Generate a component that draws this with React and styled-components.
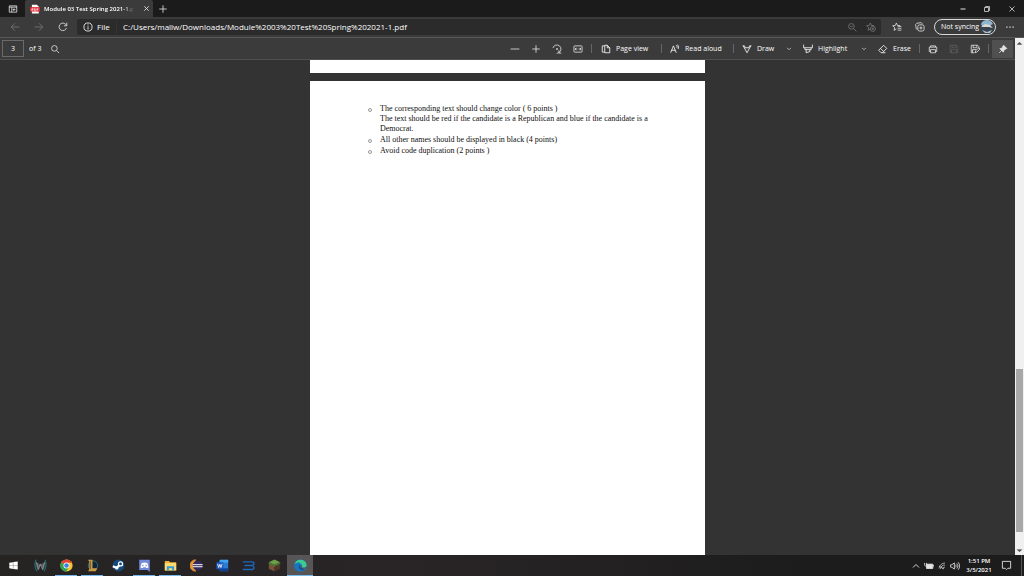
import React from "react";
import styled, { createGlobalStyle } from "styled-components";

const GlobalStyle = createGlobalStyle`
  *,
  *::before {
    box-sizing: border-box;
  }

  body {
    margin: 0;
    background: #333333;
    color: #ffffff;
    font: 8px/10px "Open Sans", "Noto Sans", sans-serif;
  }

  button,
  input {
    margin: 0;
    padding: 0;
    border: 0;
    background: none;
    color: inherit;
    font: inherit;
  }

  svg {
    display: block;
    flex: none;
  }
`;

const Screen = styled.div`
  display: flex;
  flex-direction: column;
  height: 100vh;
  overflow: hidden;
`;

const TitleBar = styled.header`
  display: flex;
  height: 17px;
  background: #1b1b1b;
`;

const IconButton = styled.button`
  display: flex;
  align-items: center;
  justify-content: center;
  flex: none;
  width: ${props => props.$width || 21}px;
  height: 100%;
  color: ${props => (props.$dim ? "#777777" : "#e4e4e4")};
  background: ${props => (props.$pressed ? "#505050" : "none")};
`;

const Tab = styled.div`
  display: flex;
  align-items: center;
  gap: 4px;
  width: 128px;
  padding-left: 5px;
  border-radius: 2px 2px 0 0;
  background: #3b3b3b;
`;

const TabTitle = styled.span`
  flex: 1;
  white-space: nowrap;
  font-size: 6px;
  font-weight: 600;
  mask-image: linear-gradient(to right, #000 88%, transparent);
`;

const WindowControls = styled.div`
  display: flex;
  margin-left: auto;
`;

const NavBar = styled.nav`
  display: flex;
  align-items: center;
  height: 21px;
  padding: 0 4px 0 3px;
  background: #3b3b3b;
  border-bottom: 1px solid #585858;
`;

const AddressBar = styled.div`
  display: flex;
  align-items: center;
  flex: 1;
  height: 16px;
  margin: 0 5px 0 2px;
  padding-left: 6px;
  border-radius: 2px;
  background: #2b2b2b;
`;

const FileLabel = styled.span`
  width: 19px;
  margin-left: 4px;
`;

const Address = styled.input`
  flex: 1;
  min-width: 0;
  height: 14px;
  margin-bottom: 1px;
  padding-left: 6px;
  border-left: 1px solid #333333;
`;

const ProfileButton = styled.button`
  display: flex;
  align-items: center;
  justify-content: space-between;
  width: 62px;
  height: 16px;
  margin: 0 3px;
  padding: 0 1px 0 6px;
  border: 1px solid #d8d8d8;
  border-radius: 8px;
  font-size: 7px;
  white-space: nowrap;
`;

const Viewer = styled.div`
  display: flex;
  flex: 1;
  min-height: 0;
`;

const Reader = styled.div`
  display: flex;
  flex-direction: column;
  flex: 1;
  min-width: 0;
`;

const PdfBar = styled.div`
  display: flex;
  align-items: center;
  justify-content: space-between;
  height: 22px;
  padding: 0 2px;
  background: #3b3b3b;
  border-bottom: 1px solid #505050;
  font-size: 7px;
`;

const PdfGroup = styled.div`
  display: flex;
  align-items: center;
  height: 18px;
`;

const PageNumber = styled.input`
  width: 22px;
  height: 17px;
  margin-right: 5px;
  border: 1px solid #6a6a6a;
  text-align: center;
`;

const TotalPages = styled.label`
  width: 14px;
  white-space: nowrap;
`;

const ToolButton = styled.button`
  display: flex;
  align-items: center;
  gap: 5px;
  width: ${props => props.$width}px;
  height: 100%;
  padding-left: 6px;
  white-space: nowrap;
`;

const Separator = styled.span`
  flex: none;
  width: 1px;
  height: 9px;
  margin: 0 ${props => props.$space || 2}px;
  background: #666666;
`;

const Canvas = styled.main`
  flex: 1;
  min-height: 0;
  overflow: hidden;
  display: flex;
  flex-direction: column;
  align-items: center;
  gap: 8px;
`;

const Page = styled.article`
  width: 395px;
  max-width: 100%;
  padding: 23px 50px 0 58px;
  background: #ffffff;
  color: #101010;
  font: 8px/10px "Liberation Serif", serif;
`;

const PageEnd = styled(Page)`
  flex: none;
  height: 13px;
  padding: 0;
`;

const OpenPage = styled(Page)`
  flex: 1;
`;

const Requirements = styled.ul`
  display: flex;
  flex-direction: column;
  gap: 1px;
  margin: 0;
  padding: 0;
  list-style: none;
`;

const Requirement = styled.li`
  display: flex;
  gap: 8px;

  &::before {
    content: "";
    flex: none;
    width: 4px;
    height: 4px;
    margin-top: 4px;
    border: 1px solid #999999;
    border-radius: 50%;
  }
`;

const Scrollbar = styled.div`
  display: flex;
  flex-direction: column;
  width: 9px;
  padding: 0 1px;
  background: #f0f0f0;
  color: #505050;
`;

const ScrollArrow = styled.button`
  display: flex;
  align-items: center;
  justify-content: center;
  width: 7px;
  height: 10px;
`;

const Track = styled.div`
  flex: ${props => props.$size};
  background: ${props => (props.$thumb ? "#a8a8a8" : "none")};
`;

const Taskbar = styled.footer`
  display: flex;
  height: 21px;
  background: linear-gradient(to right, #262323, #292527 40%, #1c1c1c 80%);
`;

const AppButton = styled.button`
  display: flex;
  align-items: center;
  justify-content: center;
  width: ${props => (props.$start ? 27 : 26)}px;
  background: ${props => (props.$active ? "#575556" : "none")};
`;

const AppArt = styled.span`
  display: flex;
  align-items: center;
  justify-content: center;
  width: ${props => (props.$active ? 26 : 22)}px;
  height: 100%;
  border-bottom: 1px solid ${props => (props.$running ? "#76b9ed" : "transparent")};
`;

const Tray = styled.div`
  display: flex;
  align-items: center;
  margin-left: auto;
  margin-right: 2px;
  padding-right: 5px;
  border-right: 1px solid #555555;
`;

const Clock = styled.time`
  width: 36px;
  font-size: 6px;
  font-weight: 600;
  line-height: 9px;
  text-align: center;
  white-space: nowrap;
`;

const Icon = ({ size = 10, children }) => (
  <svg
    width={size}
    height={size}
    viewBox="0 0 16 16"
    fill="none"
    stroke="currentColor"
    strokeWidth="1.3"
    aria-hidden="true"
  >
    {children}
  </svg>
);

const Chevron = () => (
  <Icon size={6}>
    <path d="M3 5l5 5 5-5" strokeWidth="1.8" />
  </Icon>
);

const Star = () => (
  <path d="M7 1.5l1.7 4 4.3.4M7 1.5l-1.7 4-4.3.5 3.3 2.9-1 4.4L7 11" />
);

const apps = [
  {
    name: "Start",
    start: true,
    art: (
      <g fill="#fff">
        <path d="M.5 3L7 2v5.500H.5zM7.500 1.900L15.500.7v6.800h-8zM.5 8.200H7V14L.5 13zM7.500 8.200h8v7.100l-8-1.200z" />
      </g>
    )
  },
  {
    name: "Predator",
    art: (
      <g fill="none">
        <path d="M2.500 1Q-.5 8 3.500 15M13.500 1q3 7-1 14" stroke="#236b70" strokeWidth="1.5" />
        <path d="M2 3l5 3.5h2L14 3l-1 7-2 4-1.5-5H6.500L5 14 3 10z" fill="#555b60" />
        <path d="M3 4l2.500 9L8 6l2.500 7L13 4" stroke="#8c9498" />
      </g>
    )
  },
  {
    name: "Chrome",
    running: true,
    art: (
      <g>
        <circle cx="8" cy="8" r="7.500" fill="#f6c431" />
        <path d="M8 8L1.500 4.200A7.500 7.500 0 0 1 14.500 4.500H8z" fill="#e34133" />
        <path d="M8 8L1.500 4.200A7.500 7.500 0 0 0 7.500 15.500L11 10z" fill="#2fa452" />
        <circle cx="8" cy="8" r="3.700" fill="#fff" />
        <circle cx="8" cy="8" r="2.800" fill="#3d7fe5" />
      </g>
    )
  },
  {
    name: "League of Legends",
    running: true,
    art: (
      <g>
        <circle cx="8.500" cy="8" r="5.700" fill="#0c2436" stroke="#327d95" />
        <path d="M2.500 1h5.500v10.500h6L12 15H2.500L4 12.500v-9z" fill="#c99a43" />
        <path d="M5.500 2.500v10" stroke="#77501f" />
      </g>
    )
  },
  {
    name: "Steam",
    art: (
      <g>
        <circle cx="8" cy="8" r="7.300" fill="#154979" />
        <path d="M1 9l4.500 1.800L9 8" stroke="#fff" strokeWidth="2.800" fill="none" />
        <circle cx="10.500" cy="6" r="2.500" fill="#154979" stroke="#fff" strokeWidth="1.500" />
        <circle cx="6" cy="11" r="2" fill="#fff" />
      </g>
    )
  },
  {
    name: "Discord",
    running: true,
    art: (
      <g>
        <path d="M1.500 1h13v15l-3-2.500h-10z" fill="#7289da" />
        <path d="M4.500 5q3.500-1.500 7 0l1.500 5q-2 1.500-3 1l-.5-1h-3L6 11q-1 .5-3-1z" fill="#fff" />
        <path d="M6 7v2M10 7v2" stroke="#7289da" strokeWidth="1.500" />
      </g>
    )
  },
  {
    name: "File Explorer",
    running: true,
    art: (
      <g>
        <path d="M1 2.500h5l1.500 1.500H15v10H1z" fill="#eeb23c" />
        <path d="M1 5h14v9H1z" fill="#fcdc72" />
        <path d="M3.500 14V9h9v5h-2.500v-2.500H6V14z" fill="#379bd7" />
      </g>
    )
  },
  {
    name: "Eclipse",
    art: (
      <g>
        <path d="M7 1A7 7 0 0 0 7 15A10 10 0 0 1 7 1" fill="#e99835" stroke="#e99835" />
        <circle cx="9.500" cy="8" r="6" fill="#35295f" />
        <path d="M3.500 7h12M3.500 9.500h12" stroke="#fff" strokeWidth="1.200" />
      </g>
    )
  },
  {
    name: "Word",
    art: (
      <g>
        <path d="M4.500 1H15v14H4.500z" fill="#2b7cd3" />
        <path d="M4.500 1H15v3.500H4.500z" fill="#41a5ee" />
        <path d="M4.500 11.500H15V15H4.500z" fill="#103f91" />
        <path d="M.5 4h8.500v8.500H.5z" fill="#185abd" />
        <path d="M2 6l1.300 4.500L4.700 6.500l1.400 4L7.500 6" stroke="#fff" fill="none" />
      </g>
    )
  },
  {
    name: "Notes",
    art: (
      <path
        d="M1 3.500h12l1.500 1v2l-1.500 1.500H3M13 8l1.500 1.500v2L13 13H1"
        fill="none"
        stroke="#1b67bb"
        strokeWidth="1.700"
      />
    )
  },
  {
    name: "Minecraft",
    art: (
      <g>
        <path d="M8 .5l7 3.500-7 3.500L1 4z" fill="#69a047" />
        <path d="M1 4l7 3.500v8L1 12z" fill="#795139" />
        <path d="M15 4L8 7.500v8l7-3.500z" fill="#4e3528" />
        <path d="M1 4l7 3.500L15 4v2l-2 .5-1 1.500-1-.5-3 2-2-2-2 .5-3-2.500z" fill="#477b35" />
      </g>
    )
  },
  {
    name: "Edge",
    active: true,
    art: (
      <g>
        <circle cx="8" cy="8" r="7.500" fill="#1689cf" />
        <path d="M.8 6C3-1 14-1 15.500 7c.3 3-3 4.500-6 3 2-4-2.500-6.500-8.700-4z" fill="#3ccb91" />
        <path d="M.5 8c1-4.500 7-4.500 7.500-2-3 1-3 6 3 7.500-4 3.500-10 1-10.500-5.500z" fill="#1876c5" />
        <path d="M8 6.500c-2 3 1 6 5.500 5L11 14C5 13 4.500 8.500 8 6.500z" fill="#144e91" />
        <path d="M8 6.500q2 .5 1.500 3.500 3 2 6-.5l-1 2c-4 2-8-1-6.500-5z" fill="#575556" />
      </g>
    )
  }
];

const Tabs = () => (
  <TitleBar>
    <IconButton $width={25} aria-label="Tab actions">
      <Icon>
        <path d="M2 3h12v10H2zM2 5h12M6 5v8M10 7L8 9l2 2M8 9h4" />
      </Icon>
    </IconButton>
    <Tab>
      <svg width="10" height="10" viewBox="0 0 16 16" aria-hidden="true">
        <path d="M3 1h8l3 3v11H3z" fill="#fff" />
        <path d="M0 5h16v7H0z" fill="#e32935" />
        <path d="M3 11V7.500h2v2H3M7 7.500v3h1.500l1-1.500-1-1.500zM11 11V7.500h2.500M11 9h2" stroke="#fff" fill="none" />
      </svg>
      <TabTitle>Module 03 Test Spring 2021-1.p</TabTitle>
      <IconButton $width={17} aria-label="Close tab">
        <Icon size={7}>
          <path d="M3 3l10 10M13 3L3 13" strokeWidth="2" />
        </Icon>
      </IconButton>
    </Tab>
    <IconButton $width={19} aria-label="New tab">
      <Icon>
        <path d="M8 2v12M2 8h12" />
      </Icon>
    </IconButton>
    <WindowControls>
      <IconButton $width={25} aria-label="Minimize">
        <Icon size={8}>
          <path d="M3 8h10" strokeWidth="2" />
        </Icon>
      </IconButton>
      <IconButton $width={24} aria-label="Restore">
        <Icon size={8}>
          <path d="M3 5h8v8H3zM5 5V3h8v8h-2" strokeWidth="1.500" />
        </Icon>
      </IconButton>
      <IconButton $width={25} aria-label="Close">
        <Icon size={8}>
          <path d="M3 3l10 10M13 3L3 13" strokeWidth="1.500" />
        </Icon>
      </IconButton>
    </WindowControls>
  </TitleBar>
);

const Navigation = () => (
  <NavBar>
    <IconButton $width={24} $dim aria-label="Back">
      <Icon>
        <path d="M15 8H2M8 2L2 8l6 6" />
      </Icon>
    </IconButton>
    <IconButton $width={24} $dim aria-label="Forward">
      <Icon>
        <path d="M1 8h13M8 2l6 6-6 6" />
      </Icon>
    </IconButton>
    <IconButton $width={24} aria-label="Refresh">
      <Icon>
        <path d="M13.500 9.500A6 6 0 1 1 12 3.500l2 2M14 1v5H9.500" />
      </Icon>
    </IconButton>
    <AddressBar>
      <Icon>
        <circle cx="8" cy="8" r="6.500" />
        <path d="M8 7v5M8 4v1.500" />
      </Icon>
      <FileLabel>File</FileLabel>
      <Address
        aria-label="Address"
        defaultValue="C:/Users/mallw/Downloads/Module%2003%20Test%20Spring%202021-1.pdf"
      />
      <IconButton $width={19} $dim aria-label="Zoom">
        <Icon>
          <circle cx="7" cy="7" r="4.500" />
          <path d="M10.500 10.500L15 15M5 7h4" />
        </Icon>
      </IconButton>
      <IconButton $width={20} $dim aria-label="Add to favorites">
        <Icon>
          <Star />
          <circle cx="11" cy="11" r="4" />
          <path d="M11 9v4M9 11h4" />
        </Icon>
      </IconButton>
    </AddressBar>
    <IconButton $width={22} aria-label="Favorites">
      <Icon>
        <Star />
        <path d="M9 7h6M9 10h6M9 13h6" />
      </Icon>
    </IconButton>
    <IconButton $width={23} aria-label="Collections">
      <Icon>
        <path d="M4 12L2 11 1 4l2-2 7-1 2 2" />
        <rect x="4.500" y="4.500" width="10" height="10" rx="3" />
        <path d="M9.500 7v5M7 9.500h5" />
      </Icon>
    </IconButton>
    <ProfileButton>
      Not syncing
      <svg width="14" height="14" viewBox="0 0 14 14" aria-hidden="true">
        <circle cx="7" cy="7" r="7" fill="#354451" />
        <path d="M1 4a6.500 6.500 0 0 1 12 0L9 6 2 6z" fill="#8fb5d1" />
        <path d="M1 7l4-3 5 1 3 3-4-1z" fill="#dad8d0" />
        <path d="M2 10l5 2 5-2-2 3H5z" fill="#b7bdc0" />
      </svg>
    </ProfileButton>
    <IconButton $width={21} aria-label="Settings and more">
      <Icon>
        <path d="M2 8h2M7 8h2M12 8h2" strokeWidth="2" />
      </Icon>
    </IconButton>
  </NavBar>
);

const PdfToolbar = () => (
  <PdfBar>
    <PdfGroup>
      <PageNumber id="page-number" defaultValue="3" />
      <TotalPages htmlFor="page-number">of 3</TotalPages>
      <IconButton $width={24} aria-label="Find">
        <Icon>
          <circle cx="7" cy="7" r="4.500" />
          <path d="M10.500 10.500L14.500 14.500" />
        </Icon>
      </IconButton>
    </PdfGroup>
    <PdfGroup>
      <IconButton aria-label="Zoom out">
        <Icon>
          <path d="M1 8h14" />
        </Icon>
      </IconButton>
      <IconButton aria-label="Zoom in">
        <Icon>
          <path d="M8 2v12M2 8h12" />
        </Icon>
      </IconButton>
      <IconButton aria-label="Rotate">
        <Icon>
          <path d="M1.500 6.500a6.500 6.500 0 1 1 9 7.500l-3 1M11 10v4.500h4" />
          <circle cx="8" cy="8" r="1" />
        </Icon>
      </IconButton>
      <IconButton aria-label="Fit to width">
        <Icon>
          <rect x="1.500" y="3" width="13" height="10" rx="1" />
          <path d="M3.500 8h3.500M9 8h3.500M5 6L3.500 8 5 10M11 6l1.500 2-1.500 2" />
        </Icon>
      </IconButton>
      <Separator $space={3} />
      <ToolButton $width={64}>
        <Icon>
          <path d="M6 13H2V3h4M6 2h4l4 4v8H6zM10 2v4h4" />
        </Icon>
        Page view
      </ToolButton>
      <Separator />
      <ToolButton $width={67}>
        <Icon>
          <path d="M1 14L5.500 3 10 14M2.500 10h6M10 2q2 2 1 4M12 1q3 3 1 7" />
        </Icon>
        Read aloud
      </ToolButton>
      <Separator />
      <ToolButton $width={44}>
        <Icon>
          <path d="M1 3h3l1 3h6l1-3h3M2 3l6 11 6-11" />
        </Icon>
        Draw
      </ToolButton>
      <IconButton $width={17} aria-label="Draw options">
        <Chevron />
      </IconButton>
      <ToolButton $width={58}>
        <Icon>
          <path d="M1 1v5h14V1M3 6v3h10V6M5 9v5l6-2V9" />
        </Icon>
        Highlight
      </ToolButton>
      <IconButton $width={17} aria-label="Highlight options">
        <Chevron />
      </IconButton>
      <ToolButton $width={45}>
        <Icon>
          <path d="M9 2l5 5-7 7H5l-4-4zM4 7l5 5M7 14h5" />
        </Icon>
        Erase
      </ToolButton>
      <Separator />
      <IconButton aria-label="Print">
        <Icon>
          <path d="M4 5V3h8v2M4 12H2V5h12v7h-2M4 9h8v5H4z" />
        </Icon>
      </IconButton>
      <IconButton $dim disabled aria-label="Save">
        <Icon>
          <path d="M2 2h10l2 2v10H2zM5 2v4h6V2M4 14V9h8v5" opacity=".5" />
        </Icon>
      </IconButton>
      <IconButton aria-label="Save as">
        <Icon>
          <path d="M7 14H2V2h10l2 2v3M5 2v4h6V2M4 14V9h6M8 14l1-3 5-5 2 2-5 5z" />
        </Icon>
      </IconButton>
      <Separator $space={3} />
      <IconButton $pressed aria-label="Unpin toolbar">
        <Icon>
          <path d="M9 2l5 5-1 1-2 .5L9 11l-.5 2L3 7.500 5 7l2.500-2L8 3zM6 10l-4 4" fill="currentColor" />
        </Icon>
      </IconButton>
    </PdfGroup>
  </PdfBar>
);

const App = () => (
  <Screen>
    <GlobalStyle />
    <Tabs />
    <Navigation />
    <Viewer>
      <Reader>
        <PdfToolbar />
        <Canvas>
          <PageEnd />
          <OpenPage>
            <Requirements>
              <Requirement>
                <div>
                  The corresponding text should change color ( 6 points )
                  <br />
                  The text should be red if the candidate is a Republican and
                  blue if the candidate is a Democrat.
                </div>
              </Requirement>
              <Requirement>
                All other names should be displayed in black (4 points)
              </Requirement>
              <Requirement>Avoid code duplication (2 points )</Requirement>
            </Requirements>
          </OpenPage>
        </Canvas>
      </Reader>
      <Scrollbar>
        <ScrollArrow aria-label="Scroll up">
          <Icon size={7}>
            <path d="M3 10l5-5 5 5z" fill="currentColor" />
          </Icon>
        </ScrollArrow>
        <Track $size={321} />
        <Track $size={163} $thumb />
        <Track $size={13} />
        <ScrollArrow aria-label="Scroll down">
          <Icon size={7}>
            <path d="M3 6l5 5 5-5z" fill="currentColor" />
          </Icon>
        </ScrollArrow>
      </Scrollbar>
    </Viewer>
    <Taskbar>
      {apps.map(app => (
        <AppButton
          key={app.name}
          aria-label={app.name}
          $start={app.start}
          $active={app.active}
        >
          <AppArt $running={app.running || app.active} $active={app.active}>
            <svg
              width={app.start ? 9 : 13}
              height={app.start ? 9 : 13}
              viewBox="0 0 16 16"
              aria-hidden="true"
            >
              {app.art}
            </svg>
          </AppArt>
        </AppButton>
      ))}
      <Tray>
        <IconButton $width={13} aria-label="Show hidden icons">
          <Icon size={8}>
            <path d="M2 11l6-6 6 6" strokeWidth="1.800" />
          </Icon>
        </IconButton>
        <IconButton $width={13} aria-label="Battery">
          <Icon>
            <path d="M4 5h10v7H4z" fill="currentColor" />
            <path d="M14 7h2v3M1 3v4q2 2 3 0V3" />
          </Icon>
        </IconButton>
        <IconButton $width={13} aria-label="Network">
          <Icon size={8}>
            <path d="M2 13A12 12 0 0 1 14 2M5 14a9 9 0 0 1 9-8M9 14a5 5 0 0 1 5-4M2 8l10 6" />
          </Icon>
        </IconButton>
        <IconButton $width={13} aria-label="Volume">
          <Icon>
            <path d="M1 6h2l4-3v10l-4-3H1zM9 6q2 2 0 4M11 4q4 4 0 8M13 2q5 6 0 12" />
          </Icon>
        </IconButton>
        <Clock>
          1:51 PM
          <br />
          3/5/2021
        </Clock>
        <IconButton $width={19} aria-label="Notifications">
          <Icon size={11}>
            <path d="M2 2h12v10h-4l-2 2-2-2H2z" />
          </Icon>
        </IconButton>
      </Tray>
    </Taskbar>
  </Screen>
);

export default App;
